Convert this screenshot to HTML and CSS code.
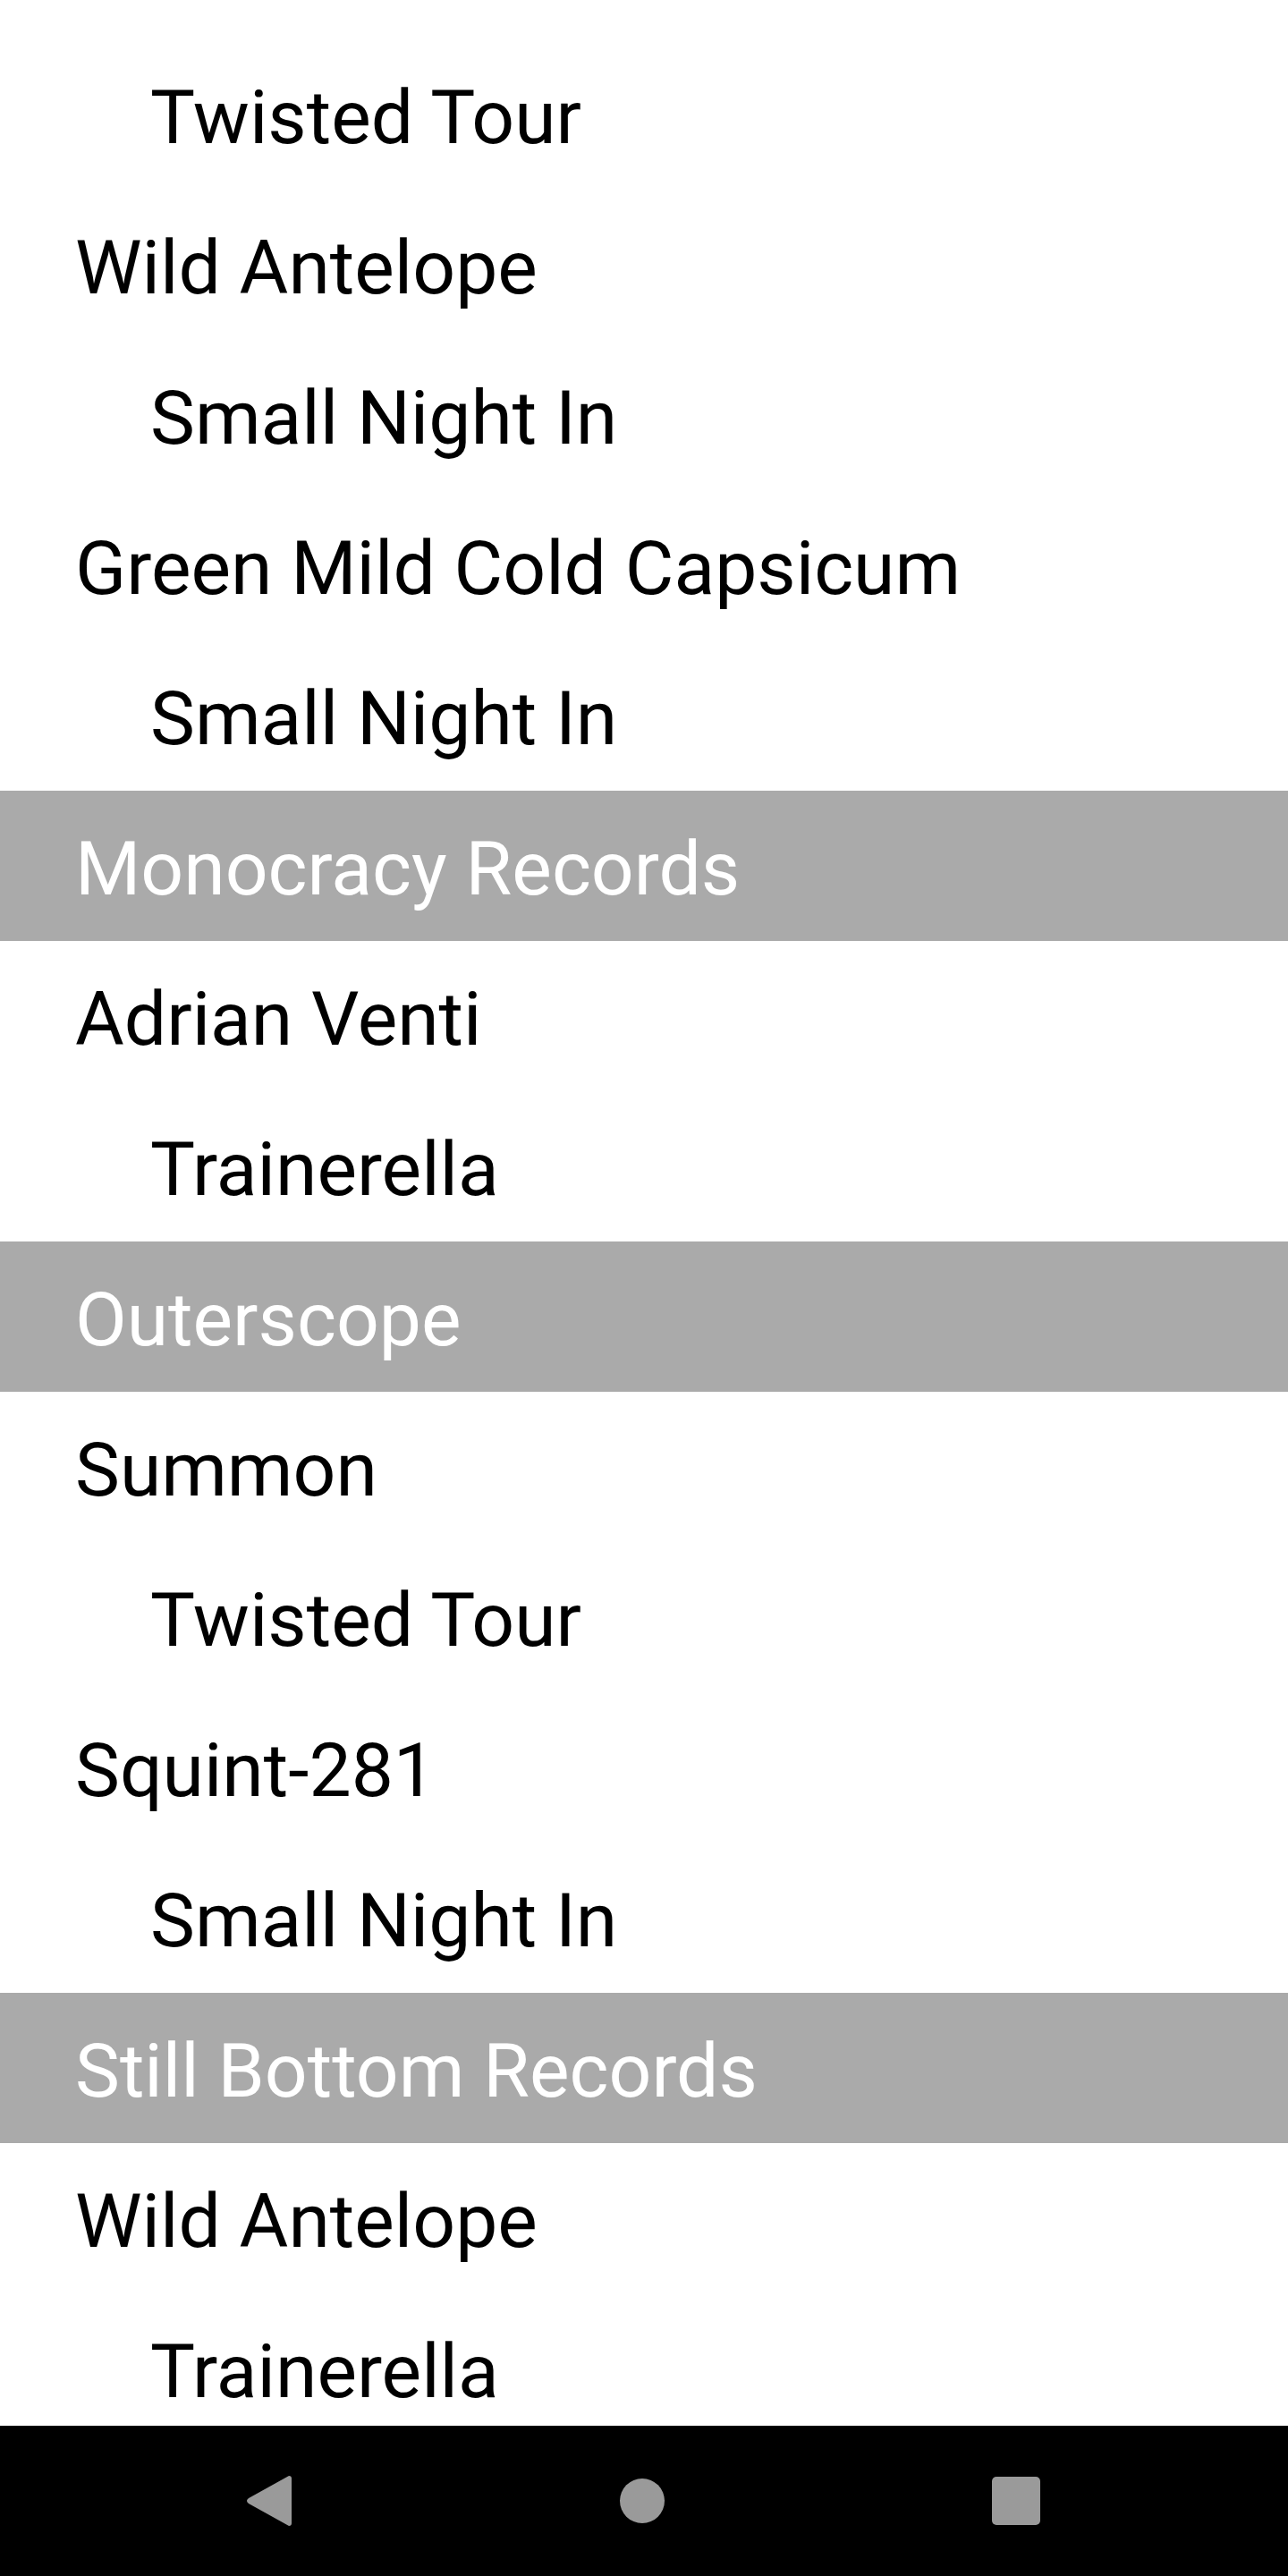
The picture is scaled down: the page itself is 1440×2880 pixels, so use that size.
FILE: index.html
```html
<!DOCTYPE html>
<html>
<head>
<meta charset="utf-8">
<link rel="stylesheet" href="styles.css">
</head>
<body>
<div class="screen">
  <div class="list">
    <div class="row sub">Twisted Tour</div>
    <div class="row">Wild Antelope</div>
    <div class="row sub">Small Night In</div>
    <div class="row">Green Mild Cold Capsicum</div>
    <div class="row sub">Small Night In</div>
    <div class="row header">Monocracy Records</div>
    <div class="row">Adrian Venti</div>
    <div class="row sub">Trainerella</div>
    <div class="row header">Outerscope</div>
    <div class="row">Summon</div>
    <div class="row sub">Twisted Tour</div>
    <div class="row">Squint-281</div>
    <div class="row sub">Small Night In</div>
    <div class="row header">Still Bottom Records</div>
    <div class="row">Wild Antelope</div>
    <div class="row sub">Trainerella</div>
  </div>
  <div class="navbar">
    <svg class="nav-icon" width="60" height="60" viewBox="0 0 60 60">
      <path d="M53 2 Q56 2 56 5 L56 55 Q56 58 53 58 L8 33 Q4 30 8 27 Z" fill="#9a9a9a"/>
    </svg>
    <svg class="nav-icon" width="60" height="60" viewBox="0 0 60 60">
      <circle cx="30" cy="30" r="25" fill="#9a9a9a"/>
    </svg>
    <svg class="nav-icon" width="60" height="60" viewBox="0 0 60 60">
      <rect x="3" y="3" width="54" height="54" rx="5" fill="#9a9a9a"/>
    </svg>
  </div>
</div>
</body>
</html>
```

FILE: styles.css
```css
html, body {
  margin: 0;
  padding: 0;
  background: #ffffff;
}

.screen {
  width: 1440px;
  height: 2880px;
  display: flex;
  flex-direction: column;
  overflow: hidden;
}

.list {
  flex: 1;
  overflow: hidden;
  padding-top: 44px;
  display: flex;
  flex-direction: column;
}

.row {
  flex: none;
  height: 168px;
  box-sizing: border-box;
  padding: 8px 0 0 84px;
  line-height: 160px;
  font-family: Roboto, "Noto Sans", sans-serif;
  font-size: 84px;
  color: #000000;
  white-space: nowrap;
}

.row.sub {
  padding-left: 168px;
}

.row.header {
  background: #aaaaaa;
  color: #ffffff;
}

.navbar {
  flex: none;
  height: 168px;
  background: #000000;
  display: flex;
  align-items: center;
  gap: 358px;
  padding-left: 270px;
}

.nav-icon {
  display: block;
  flex: none;
}
```
